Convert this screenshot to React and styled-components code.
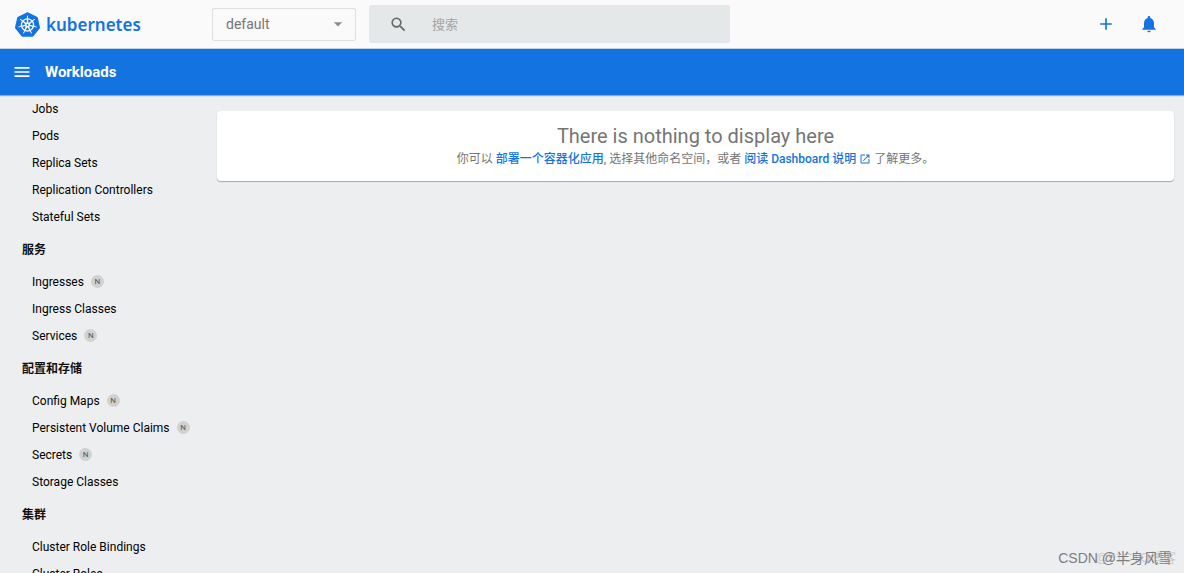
import React from "react";
import styled, { createGlobalStyle } from "styled-components";
import { MdAdd, MdArrowDropDown, MdMenu, MdNotifications, MdOpenInNew, MdSearch } from "react-icons/md";
import { SiKubernetes } from "react-icons/si";

const groups = [
    {
        items: [
            { name: "Jobs" },
            { name: "Pods" },
            { name: "Replica Sets" },
            { name: "Replication Controllers" },
            { name: "Stateful Sets" },
        ],
    },
    {
        title: "服务",
        items: [
            { name: "Ingresses", namespaced: true },
            { name: "Ingress Classes" },
            { name: "Services", namespaced: true },
        ],
    },
    {
        title: "配置和存储",
        items: [
            { name: "Config Maps", namespaced: true },
            { name: "Persistent Volume Claims", namespaced: true },
            { name: "Secrets", namespaced: true },
            { name: "Storage Classes" },
        ],
    },
    {
        title: "集群",
        items: [{ name: "Cluster Role Bindings" }, { name: "Cluster Roles" }],
    },
];

function App() {
    return <Page>
        <GlobalStyle />
        <Header>
            <Logo href="#">
                <SiKubernetes />
                <span>kubernetes</span>
            </Logo>
            <Namespace>
                <select aria-label="Namespace" defaultValue="default">
                    <option value="default">default</option>
                </select>
                <MdArrowDropDown />
            </Namespace>
            <Search>
                <MdSearch />
                <input type="search" placeholder="搜索" aria-label="搜索" />
            </Search>
            <Actions>
                <IconButton aria-label="Create new resource"><MdAdd /></IconButton>
                <IconButton aria-label="Notifications"><MdNotifications /></IconButton>
            </Actions>
        </Header>
        <Toolbar>
            <IconButton $light aria-label="Toggle menu"><MdMenu /></IconButton>
            <h1>Workloads</h1>
        </Toolbar>
        <Body>
            <Sidebar>
                {groups.map((group, index) => <React.Fragment key={index}>
                    {group.title && <GroupTitle>{group.title}</GroupTitle>}
                    {group.items.map((item) => <NavItem href="#" key={item.name}>
                        {item.name}
                        {item.namespaced && <Badge>N</Badge>}
                    </NavItem>)}
                </React.Fragment>)}
            </Sidebar>
            <Content>
                <Card>
                    <h2>There is nothing to display here</h2>
                    <p>
                        你可以 <a href="#">部署一个容器化应用</a>, 选择其他命名空间，或者 <a href="#">阅读 Dashboard 说明 <MdOpenInNew /></a> 了解更多。
                    </p>
                </Card>
            </Content>
        </Body>
        <Watermark $faint>@51CTO博客</Watermark>
        <Watermark>CSDN @半身风雪</Watermark>
    </Page>;
}

const GlobalStyle = createGlobalStyle`
*{
    box-sizing:border-box;
}
body{
    margin:0;
    background-color:#edeef0;
    font-family:Roboto, "Noto Sans CJK SC", sans-serif;
}
a{
    text-decoration:none;
}
`;

const Page = styled.div`
display:flex;
flex-direction:column;
height:100vh;
overflow:hidden;
`;

const Header = styled.header`
display:flex;
align-items:center;
flex:none;
height:48px;
padding:0 16px 0 15px;
background-color:#fafafa;
`;

const Logo = styled.a`
display:flex;
align-items:center;
gap:6px;
width:197px;
color:#1473e2;
font-family:"Noto Sans", sans-serif;
font-size:17px;
font-weight:600;
svg{
    width:25px;
    height:25px;
}
`;

const Namespace = styled.div`
display:grid;
align-items:center;
width:144px;
height:33px;
margin-right:13px;
select{
    grid-area:1 / 1;
    height:100%;
    padding:0 13px;
    appearance:none;
    background-color:#fafafa;
    border:1px solid #dfdfdf;
    border-radius:2px;
    color:#757575;
    font-family:inherit;
    font-size:14px;
}
svg{
    grid-area:1 / 1;
    justify-self:end;
    width:20px;
    height:20px;
    margin-right:8px;
    color:#8c8c8c;
    pointer-events:none;
}
`;

const Search = styled.label`
display:flex;
align-items:center;
flex:0 1 361px;
gap:24px;
height:38px;
padding:0 20px;
background-color:#e4e8e9;
border-radius:2px;
svg{
    flex:none;
    width:19px;
    height:19px;
    color:#666;
}
input{
    flex:1;
    min-width:0;
    padding:0;
    border:none;
    outline:none;
    background:none;
    color:#555;
    font-family:inherit;
    font-size:13px;
    &::placeholder{
        color:#a3a5a6;
    }
}
`;

const Actions = styled.div`
display:flex;
gap:5px;
margin-left:auto;
`;

const IconButton = styled.button`
display:flex;
align-items:center;
justify-content:center;
width:${({ $light }) => $light ? "20px" : "38px"};
height:38px;
padding:0;
border:none;
background:none;
color:${({ $light }) => $light ? "#fff" : "#1473e2"};
cursor:pointer;
svg{
    flex:none;
    width:20px;
    height:20px;
}
`;

const Toolbar = styled.div`
display:flex;
align-items:center;
flex:none;
gap:13px;
height:47px;
padding:0 12px;
background-color:#1273e1;
border-top:1px solid #c3d3e6;
box-shadow:0 1px 1px rgba(0,0,0,0.3);
z-index:1;
h1{
    margin:0;
    color:#fff;
    font-size:15px;
    font-weight:700;
}
`;

const Body = styled.div`
display:flex;
flex:1;
min-height:0;
`;

const Sidebar = styled.nav`
flex:none;
width:207px;
overflow:hidden;
`;

const GroupTitle = styled.div`
height:38px;
padding:2px 0 0 22px;
color:#111;
font-size:12px;
font-weight:700;
line-height:36px;
`;

const NavItem = styled.a`
display:flex;
align-items:center;
gap:7px;
height:27px;
padding-left:32px;
color:#000;
font-size:12px;
font-weight:400;
`;

const Badge = styled.span`
width:13px;
height:13px;
border-radius:50%;
background-color:#d0d1d3;
color:#555;
font-size:8px;
line-height:13px;
text-align:center;
`;

const Content = styled.main`
flex:1;
min-width:0;
padding:16px 10px;
`;

const Card = styled.section`
padding:12px 16px;
background-color:#fff;
border-radius:4px;
box-shadow:0 1px 1px rgba(0,0,0,0.3);
color:#757575;
text-align:center;
h2{
    margin:0;
    font-size:20px;
    font-weight:400;
    line-height:26px;
}
p{
    margin:0;
    padding-top:1px;
    font-size:12px;
    line-height:19px;
}
a{
    color:#1473e2;
    font-weight:500;
}
svg{
    width:12px;
    height:12px;
    vertical-align:-2px;
}
`;

const Watermark = styled.div`
position:absolute;
right:${({ $faint }) => $faint ? "8px" : "12px"};
bottom:6px;
color:${({ $faint }) => $faint ? "#c9cacc" : "#7d7e80"};
font-family:"Liberation Sans", "Noto Sans CJK SC", sans-serif;
font-size:${({ $faint }) => $faint ? "13px" : "14px"};
line-height:18px;
pointer-events:none;
`;

export default App;
